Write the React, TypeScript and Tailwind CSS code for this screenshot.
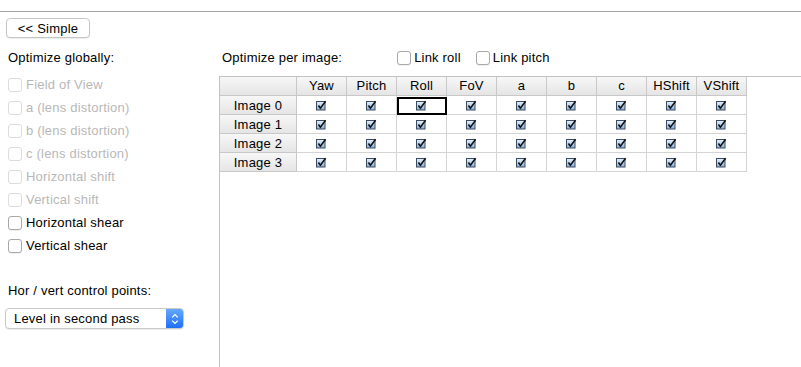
import React from 'react';

const columns = ["Yaw", "Pitch", "Roll", "FoV", "a", "b", "c", "HShift", "VShift"];
const images = ["Image 0", "Image 1", "Image 2", "Image 3"];

const globalOptions = [
  { label: "Field of View", enabled: false },
  { label: "a (lens distortion)", enabled: false },
  { label: "b (lens distortion)", enabled: false },
  { label: "c (lens distortion)", enabled: false },
  { label: "Horizontal shift", enabled: false },
  { label: "Vertical shift", enabled: false },
  { label: "Horizontal shear", enabled: true },
  { label: "Vertical shear", enabled: true },
];

const Box = ({ enabled = true }: { enabled?: boolean }) => (
  <span
    className={
      enabled
        ? "block w-[14px] h-[14px] rounded-[3px] border border-[#a9a9a9] bg-white shadow-[0_1px_0_rgba(0,0,0,0.06)]"
        : "block w-[14px] h-[14px] rounded-[3px] border border-[#dcdcdc] bg-white"
    }
  />
);

const CellCheck = () => (
  <svg width="11" height="11" viewBox="0 0 11 11">
    <defs>
      <linearGradient id="cellcheck" x1="0" y1="0" x2="0" y2="1">
        <stop offset="0" stopColor="#e6f1fc" />
        <stop offset="1" stopColor="#86b1df" />
      </linearGradient>
    </defs>
    <rect x="0.5" y="1.5" width="8.5" height="8.5" fill="url(#cellcheck)" stroke="#3d4b5e" />
    <path d="M2.4 5.6 L4.4 8.2 L9.6 1.2" stroke="#111" strokeWidth="1.6" fill="none" />
  </svg>
);

const headerBg = "bg-gradient-to-b from-[#f7f7f7] to-[#e5e5e5]";

const App = () => {
  return (
    <div className="w-[801px] h-[367px] bg-white flex flex-col overflow-hidden text-[13px] tracking-[0.2px] text-black font-['Liberation_Sans',Arial,sans-serif]">
      <div className="h-[11px]" />
      <div className="h-px bg-[#a3a3a3]" />

      {/* Simple button */}
      <div className="pt-[6px] pl-[6px]">
        <button className="h-[20px] w-[84px] rounded-[4px] border border-[#c6c6c6] bg-white shadow-[0_1px_1px_rgba(0,0,0,0.08)] leading-none">
          &lt;&lt; Simple
        </button>
      </div>

      <div className="flex flex-1 min-h-0">
        {/* Left column */}
        <div className="w-[219px] pl-[8px] flex flex-col">
          <div className="mt-[10px] h-[20px] flex items-center">Optimize globally:</div>
          <div className="mt-[5px] flex flex-col">
            {globalOptions.map((opt) => (
              <div key={opt.label} className="h-[23px] flex items-center gap-[4px]">
                <Box enabled={opt.enabled} />
                <span className={opt.enabled ? "text-black" : "text-[#b8b8b8]"}>{opt.label}</span>
              </div>
            ))}
          </div>
          <div className="mt-[24px] h-[20px] flex items-center">Hor / vert control points:</div>
          <div className="mt-[7px] -ml-[3px] w-[179px] h-[21px] flex rounded-[4px] border border-[#c9c9c9] bg-white shadow-[0_1px_1px_rgba(0,0,0,0.08)] overflow-hidden">
            <div className="flex-1 flex items-center pl-[8px]">Level in second pass</div>
            <div className="w-[17px] bg-gradient-to-b from-[#64a8ff] to-[#1f6ef5] flex items-center justify-center">
              <svg width="8" height="12" viewBox="0 0 8 12">
                <path d="M1.2 4.4 L4 1.6 L6.8 4.4 M1.2 7.6 L4 10.4 L6.8 7.6" stroke="#fff" strokeWidth="1.3" fill="none" />
              </svg>
            </div>
          </div>
        </div>

        {/* Right column */}
        <div className="flex-1 flex flex-col">
          <div className="mt-[10px] h-[20px] flex items-center pl-[3px]">
            <span>Optimize per image:</span>
            <div className="ml-[55px] flex items-center gap-[3px]">
              <Box />
              <span>Link roll</span>
            </div>
            <div className="ml-[15px] flex items-center gap-[3px]">
              <Box />
              <span>Link pitch</span>
            </div>
          </div>

          <div className="mt-[8px] flex-1 border-t border-l border-[#c2c2c2]">
            <div className="grid grid-cols-[77px_repeat(9,50px)] w-fit">
              <div className={`h-[19px] border-r border-b border-[#c8c8c8] ${headerBg}`} />
              {columns.map((c) => (
                <div
                  key={c}
                  className={`h-[19px] border-r border-b border-[#c8c8c8] flex items-center justify-center ${headerBg}`}
                >
                  {c}
                </div>
              ))}
              {images.map((img, r) => (
                <React.Fragment key={img}>
                  <div
                    className={`h-[19px] border-r border-b border-[#c8c8c8] flex items-center justify-center pt-[2px] ${headerBg}`}
                  >
                    {img}
                  </div>
                  {columns.map((c) => (
                    <div
                      key={c}
                      className="relative h-[19px] border-r border-b border-[#d4d4d4] flex items-center justify-center"
                    >
                      <CellCheck />
                      {r === 0 && c === "Roll" && (
                        <div className="absolute left-0 top-px -right-px -bottom-px border-2 border-black" />
                      )}
                    </div>
                  ))}
                </React.Fragment>
              ))}
            </div>
          </div>
        </div>
      </div>
    </div>
  );
};

export default App;
